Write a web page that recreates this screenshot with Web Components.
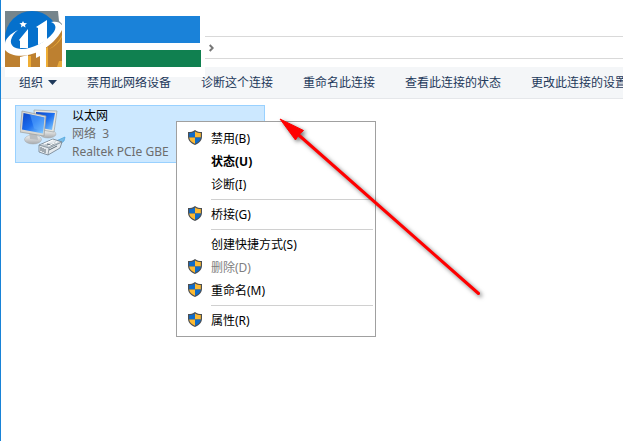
<!DOCTYPE html>
<html lang="zh-CN">
<head>
<meta charset="UTF-8">
<meta name="viewport" content="width=device-width, initial-scale=1.0">
<title>网络连接</title>
<style>
    html, body {
        height: 100%;
        margin: 0;
    }
    body {
        background: #fff;
        color: #000;
        font: 12px/18px "Noto Sans", "Noto Sans CJK SC", sans-serif;
        overflow: hidden;
    }
</style>
</head>
<body>
<explorer-window>
    <site-brand slot="brand"></site-brand>
    <address-bar slot="address"></address-bar>
    <command-bar slot="commands">
        <command-button dropdown>组织</command-button>
        <command-button>禁用此网络设备</command-button>
        <command-button>诊断这个连接</command-button>
        <command-button>重命名此连接</command-button>
        <command-button>查看此连接的状态</command-button>
        <command-button>更改此连接的设置</command-button>
    </command-bar>
    <connection-tile>
        <span slot="name">以太网</span>
        <span slot="network">网络&nbsp; 3</span>
        <span slot="device">Realtek PCIe GBE</span>
    </connection-tile>
    <context-menu slot="overlay">
        <menu-entry shield>禁用(B)</menu-entry>
        <menu-entry default>状态(U)</menu-entry>
        <menu-entry>诊断(I)</menu-entry>
        <menu-divider></menu-divider>
        <menu-entry shield>桥接(G)</menu-entry>
        <menu-divider></menu-divider>
        <menu-entry>创建快捷方式(S)</menu-entry>
        <menu-entry shield disabled>删除(D)</menu-entry>
        <menu-entry shield>重命名(M)</menu-entry>
        <menu-divider></menu-divider>
        <menu-entry shield>属性(R)</menu-entry>
    </context-menu>
    <pointer-arrow slot="overlay"></pointer-arrow>
</explorer-window>

<script>
function define(name, html, setup) {
    customElements.define(name, class extends HTMLElement {
        constructor() {
            super();
            this.attachShadow({ mode: 'open' });
            this.shadowRoot.innerHTML = html;
        }

        connectedCallback() {
            if (setup) setup(this, this.shadowRoot);
        }
    });
}

define('explorer-window', `
    <style>
        :host {
            display: flex;
            flex-direction: column;
            position: relative;
            box-sizing: border-box;
            min-height: 100%;
            border-left: 1px solid #1883d7;
            overflow: hidden;
        }
        header {
            padding-top: 36px;
            padding-bottom: 8px;
        }
        main {
            flex: 1;
            padding: 6px 14px;
        }
    </style>
    <header><slot name="address"></slot></header>
    <slot name="commands"></slot>
    <main><slot></slot></main>
    <slot name="brand"></slot>
    <slot name="overlay"></slot>
`);

define('address-bar', `
    <style>
        :host {
            display: flex;
            align-items: center;
            box-sizing: border-box;
            height: 23px;
            margin-left: 204px;
            padding-left: 4px;
            border: solid #d9d9d9;
            border-width: 1px 0;
        }
        svg { display: block; }
    </style>
    <svg width="5" height="8" viewBox="0 0 5 8" fill="none" stroke="#777" stroke-width="2">
        <path d="M.7 1 3.7 4 .7 7"/>
    </svg>
`);

define('site-brand', `
    <style>
        :host {
            position: absolute;
            top: 11px;
            left: 4px;
            display: flex;
            gap: 3px;
            width: 200px;
            padding-bottom: 10px;
            background: #fff;
        }
        svg { display: block; }
        .bars {
            display: flex;
            flex-direction: column;
            gap: 7px;
            padding-top: 5px;
        }
        .blue {
            width: 135px;
            height: 27px;
            background: #1a82d9;
        }
        .green {
            width: 135px;
            height: 17px;
            margin-left: 1px;
            background: #108050;
        }
    </style>
    <svg width="57" height="56" viewBox="0 0 57 56">
        <path fill="#bd8030" d="M0 0h57v56H0z"/>
        <path fill="#76858c" d="M0 0h57v15L45 24 0 33z"/>
        <path fill="#fff" d="M53 0h4v13l-3-3z"/>
        <circle cx="27" cy="27" r="27" fill="#0570cc"/>
        <path fill="#bd8030" d="M0 41Q29 47 57 19v37H0z"/>
        <path fill="#fff" d="M13 19C5 23 0 28 0 33v6c6 7 21 8 35 1 10-5 18-13 22-21v-5c-2-3-6-4-11-3 5 2 6 6 2 11-7 9-21 16-31 16-8 0-12-4-11-9 1-4 3-7 7-10z"/>
        <path fill="#fff" d="M14 29 23 18v19h-8V30zM31 16l11-7v20l-9 5V17z"/>
        <path fill="#fff" d="M15 46l8-2v12h-8zM31 41l10-6v21h-6V45l-4 2z"/>
        <path fill="#efae35" d="M23 45h3v11h-3zM41 37l2-1v20h-2z"/>
        <path fill="#e8aa3b" d="M44 38c6-3 10-8 13-14v2c-3 6-8 10-13 12zM54 50h3v6h-5z"/>
        <path fill="#fff" d="m18 10 1 2 3 .3-2 1.700.5 2.500-2.500-1.400-2 1.400.4-2.500-2-1.700 2.600-.3z"/>
    </svg>
    <div class="bars">
        <div class="blue"></div>
        <div class="green"></div>
    </div>
`);

define('command-bar', `
    <style>
        :host {
            display: flex;
            align-items: center;
            gap: 30px;
            height: 31px;
            padding-left: 18px;
            border-bottom: 1px solid #e5e7ea;
            background: #f4f6f8;
            color: #1e395b;
        }
    </style>
    <slot></slot>
`);

define('command-button', `
    <style>
        :host {
            display: block;
            flex: none;
        }
        button {
            display: flex;
            align-items: center;
            gap: 5px;
            padding: 0;
            border: 0;
            background: none;
            color: inherit;
            font: inherit;
        }
        svg { display: none; }
        :host([dropdown]) svg { display: block; }
    </style>
    <button type="button">
        <slot></slot>
        <svg width="9" height="5" viewBox="0 0 9 5"><path fill="#1e395b" d="M0 0h9L4.500 5z"/></svg>
    </button>
`);

define('connection-tile', `
    <style>
        :host {
            display: flex;
            align-items: flex-start;
            gap: 5px;
            box-sizing: border-box;
            width: 250px;
            height: 58px;
            padding: 1px 4px;
            border: 1px solid #99d1ff;
            background: #cce8ff;
            color: #6d6d6d;
            white-space: nowrap;
        }
        svg {
            display: block;
            flex: none;
            margin-top: 2px;
        }
        .text {
            display: flex;
            flex-direction: column;
        }
        .name { color: #000; }
    </style>
    <svg width="47" height="48" viewBox="0 0 47 48">
        <defs>
            <linearGradient id="screen" x1="0" y1="0" x2="1" y2="1">
                <stop offset="0" stop-color="#0b45c6"/>
                <stop offset=".5" stop-color="#1c6ff0"/>
                <stop offset="1" stop-color="#8ed4ff"/>
            </linearGradient>
            <linearGradient id="base" x1="0" y1="0" x2="0" y2="1">
                <stop offset="0" stop-color="#f5f6f6"/>
                <stop offset="1" stop-color="#a7aaad"/>
            </linearGradient>
        </defs>
        <ellipse cx="28" cy="25" rx="8" ry="4" fill="url(#base)" stroke="#a4a8aa" stroke-width=".5"/>
        <path fill="#e7e5df" stroke="#9aa2a5" stroke-width=".7" d="m14 1 23 1-3 21-19-3z"/>
        <path fill="url(#screen)" d="m16 3 19 1-3 17-16-3z"/>
        <ellipse cx="13" cy="30.500" rx="8.500" ry="4.500" fill="url(#base)" stroke="#a4a8aa" stroke-width=".5"/>
        <path fill="#b9bdc0" d="m9 23 8 2 1 6-8-1z"/>
        <path fill="#d8d7d2" stroke="#989c9d" stroke-width=".7" d="m2 2 24 5-2 20-24-4z"/>
        <path fill="url(#screen)" d="m3.500 4 21 4.500-1.500 16-21-4z"/>
        <path fill="#5dacff" opacity=".5" d="m10 5.500 14 3-1 14-9-3z"/>
        <path fill="#79bce8" stroke="#4aa3dc" stroke-width=".7" d="m36 32 9-4-1 4-6 4z"/>
        <path fill="#e4e9ed" stroke="#6e7e8b" stroke-width=".8" d="m19 36 14-6 9 3-2 6-12 7-9-3z"/>
        <path fill="#bdc7ce" stroke="#71808b" stroke-width=".7" d="m19 36 10 3 13-6M29 39l-1 7"/>
        <path fill="none" stroke="#5f6d77" stroke-width="1" d="m21 38 0 4m2-3v4m2-3v4M27 35l5 1 4-3m-7 8 8-4"/>
        <path fill="none" stroke="#fff" stroke-width="1" d="m24 35 9-4m-5 6 9-4"/>
    </svg>
    <div class="text">
        <div class="name"><slot name="name"></slot></div>
        <div><slot name="network"></slot></div>
        <div><slot name="device"></slot></div>
    </div>
`);

define('context-menu', `
    <style>
        :host {
            position: absolute;
            top: 121px;
            left: 175px;
            box-sizing: border-box;
            width: 200px;
            padding: 5px 2px 4px;
            border: 1px solid #a0a0a0;
            background: #fff;
        }
    </style>
    <div role="menu"><slot></slot></div>
`);

define('menu-entry', `
    <style>
        :host { display: block; }
        button {
            display: grid;
            grid-template-columns: 16px 1fr;
            align-items: center;
            gap: 8px;
            width: 100%;
            height: 23px;
            padding: 0 8px;
            border: 0;
            background: none;
            color: inherit;
            font: inherit;
            text-align: left;
        }
        svg {
            display: block;
            visibility: hidden;
            padding-bottom: 2px;
        }
        :host([shield]) svg { visibility: visible; }
        :host([default]) button { font-weight: bold; }
        button:disabled { color: #808080; }
    </style>
    <button type="button" role="menuitem">
        <svg width="16" height="15" viewBox="0 0 16 16" preserveAspectRatio="none">
            <path fill="#4c4f52" d="M8 0C6 1.700 3.700 2.200 1 2.200V7c0 4.300 2.600 7.200 7 9 4.400-1.800 7-4.700 7-9V2.200C12.300 2.200 10 1.700 8 0z"/>
            <path fill="#0f6bc9" d="M8 1.500C6.300 2.700 4.500 3.200 2.200 3.300V8H8z"/>
            <path fill="#fdb931" d="M8 1.500c1.700 1.200 3.500 1.700 5.800 1.800V8H8z"/>
            <path fill="#fdb931" d="M2.200 8H8v6.700C4.600 13.200 2.500 11.100 2.200 8z"/>
            <path fill="#0f6bc9" d="M13.800 8H8v6.700c3.400-1.500 5.500-3.600 5.800-6.700z"/>
        </svg>
        <span><slot></slot></span>
    </button>
`, (host, root) => {
    root.querySelector('button').disabled = host.hasAttribute('disabled');
});

define('menu-divider', `
    <style>
        :host {
            display: block;
            padding: 3px 0;
            margin-left: 32px;
        }
        div {
            height: 1px;
            background: #d0d0d0;
        }
    </style>
    <div role="separator"></div>
`);

define('pointer-arrow', `
    <style>
        :host {
            position: absolute;
            top: 109px;
            left: 269px;
            pointer-events: none;
        }
        svg {
            display: block;
            filter: drop-shadow(2px 2px 2px rgba(0, 0, 0, .55));
        }
    </style>
    <svg width="220" height="200" viewBox="0 0 220 200">
        <path fill="none" stroke="#f00" stroke-width="3" stroke-linecap="round" d="M27 24.500 208.500 184.500"/>
        <path fill="#f00" stroke="#f00" stroke-linejoin="round" d="M10 10 33.500 21.500 28.500 26 25.500 31z"/>
    </svg>
`);
</script>
</body>
</html>
